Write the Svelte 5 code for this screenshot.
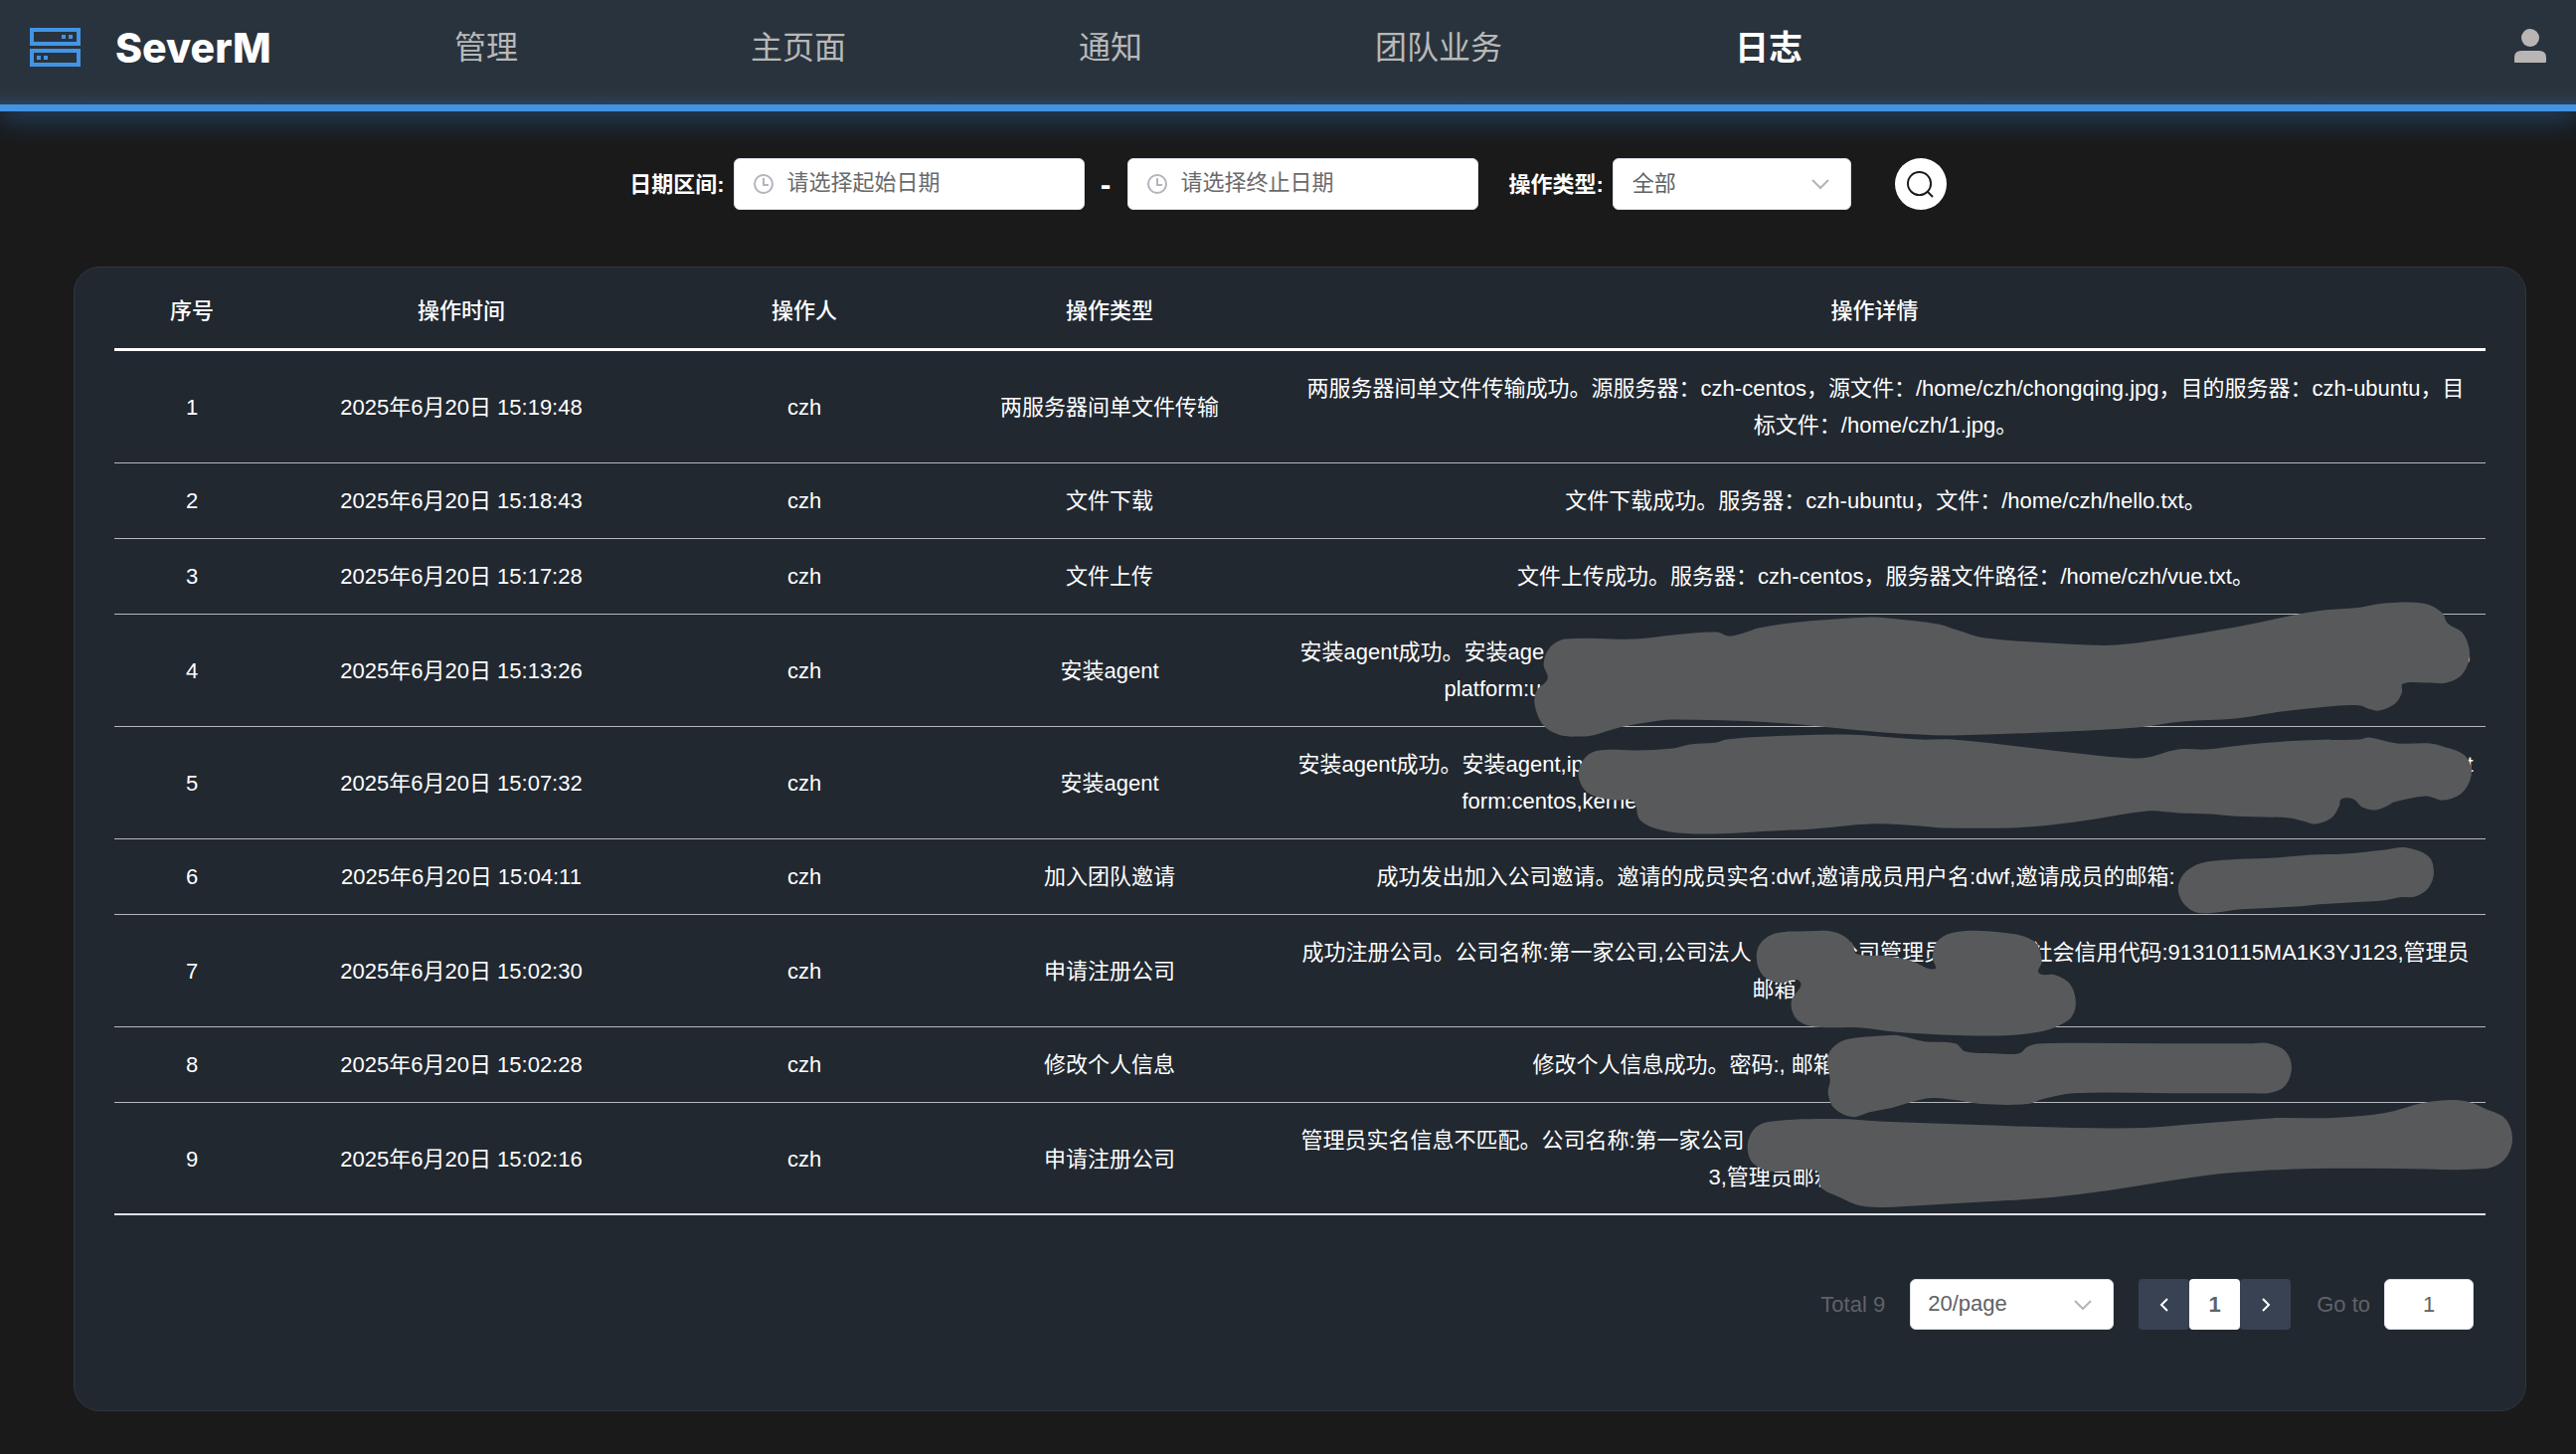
<script>
  const nav = [
    { label: '管理', active: false },
    { label: '主页面', active: false },
    { label: '通知', active: false },
    { label: '团队业务', active: false },
    { label: '日志', active: true }
  ];

  const columns = ['序号', '操作时间', '操作人', '操作类型', '操作详情'];

  // A detail is plain text, or a list of lines whose private parts are blanked out:
  // `parts` are the readable pieces, spread over the full `width` of the line.
  const rows = [
    { time: '15:19:48', type: '两服务器间单文件传输', text: '两服务器间单文件传输成功。源服务器：czh-centos，源文件：/home/czh/chongqing.jpg，目的服务器：czh-ubuntu，目标文件：/home/czh/1.jpg。' },
    { time: '15:18:43', type: '文件下载', text: '文件下载成功。服务器：czh-ubuntu，文件：/home/czh/hello.txt。' },
    { time: '15:17:28', type: '文件上传', text: '文件上传成功。服务器：czh-centos，服务器文件路径：/home/czh/vue.txt。' },
    { time: '15:13:26', type: '安装agent', lines: [
      { width: 1178, parts: ['安装agent成功。安装age', ','] },
      { width: 888, parts: ['platform:u'] }
    ] },
    { time: '15:07:32', type: '安装agent', lines: [
      { width: 1182, parts: ['安装agent成功。安装agent,ip', 't'] },
      { width: 852, parts: ['form:centos,kerne'] }
    ] },
    { time: '15:04:11', type: '加入团队邀请', lines: [
      { width: 1024, parts: ['成功发出加入公司邀请。邀请的成员实名:dwf,邀请成员用户名:dwf,邀请成员的邮箱:'] }
    ] },
    { time: '15:02:30', type: '申请注册公司', lines: [
      { width: 1174, parts: ['成功注册公司。公司名称:第一家公司,公司法人', '公司管理员', '社会信用代码:91310115MA1K3YJ123,管理员'] },
      { width: 268, parts: ['邮箱'] }
    ] },
    { time: '15:02:28', type: '修改个人信息', lines: [
      { width: 710, parts: ['修改个人信息成功。密码:, 邮箱'] }
    ] },
    { time: '15:02:16', type: '申请注册公司', lines: [
      { width: 1176, parts: ['管理员实名信息不匹配。公司名称:第一家公司'] },
      { width: 356, parts: ['3,管理员邮箱'] }
    ] }
  ];

  // Outlines of the marker strokes that cover private data.
  const marks = [
    [[1552,668],[1556,683],[1545,695],[1543,709],[1552,730],[1570,740],[1587,741],[1601,740],[1628,732],[1655,727],[1682,724],[1782,727],[1894,737],[1930,739],[1962,740],[2078,736],[2149,732],[2194,726],[2248,723],[2294,716],[2352,710],[2373,710],[2381,713],[2392,715],[2408,708],[2415,697],[2416,688],[2440,687],[2460,687],[2476,678],[2483,658],[2476,637],[2461,627],[2455,616],[2437,607],[2395,607],[2373,611],[2327,615],[2252,630],[2169,644],[2128,649],[2099,649],[1996,642],[1968,634],[1950,628],[1900,622],[1877,621],[1806,626],[1768,632],[1753,637],[1738,640],[1726,636],[1682,639],[1645,643],[1574,643],[1558,652]],
    [[1587,780],[1597,798],[1624,805],[1642,806],[1649,825],[1670,835],[1703,839],[1748,838],[1782,836],[1823,834],[1881,829],[1930,831],[1954,833],[2024,833],[2062,830],[2107,824],[2159,816],[2190,818],[2223,819],[2244,821],[2302,823],[2315,826],[2328,829],[2344,823],[2352,811],[2354,804],[2366,804],[2375,812],[2388,815],[2400,811],[2407,807],[2439,801],[2457,805],[2476,797],[2485,777],[2478,760],[2456,751],[2443,748],[2410,748],[2382,742],[2372,744],[2315,745],[2261,749],[2219,754],[2190,754],[2160,762],[2145,763],[2107,760],[2012,749],[1962,744],[1929,744],[1856,739],[1777,741],[1736,744],[1726,747],[1699,749],[1682,753],[1645,755],[1608,755],[1594,762]],
    [[2190,893],[2197,911],[2213,919],[2253,915],[2314,912],[2332,910],[2367,908],[2398,906],[2413,903],[2429,902],[2442,893],[2447,878],[2442,862],[2420,853],[2398,855],[2358,859],[2323,860],[2288,863],[2219,867],[2199,876]],
    [[1766,963],[1772,981],[1788,989],[1810,988],[1801,1008],[1806,1025],[1823,1033],[1869,1034],[1902,1038],[1930,1040],[1975,1042],[2017,1042],[2052,1038],[2070,1032],[2083,1023],[2087,1008],[2081,990],[2066,981],[2050,979],[2053,967],[2045,947],[2010,938],[1966,938],[1948,947],[1943,963],[1945,975],[1922,967],[1898,962],[1867,960],[1863,951],[1854,942],[1840,937],[1819,937],[1786,939],[1771,948]],
    [[1837,1067],[1840,1087],[1838,1100],[1844,1115],[1862,1124],[1881,1119],[1902,1115],[1922,1109],[1942,1105],[1966,1107],[1992,1111],[2039,1111],[2054,1106],[2085,1100],[2180,1100],[2265,1100],[2281,1100],[2297,1093],[2304,1075],[2298,1058],[2281,1050],[2265,1050],[2180,1050],[2052,1050],[2039,1053],[2030,1060],[2006,1060],[1976,1058],[1966,1050],[1935,1048],[1909,1042],[1896,1042],[1856,1046],[1842,1055]],
    [[1757,1155],[1763,1171],[1782,1179],[1826,1178],[1831,1195],[1850,1205],[1869,1213],[1890,1215],[1915,1214],[2019,1208],[2063,1205],[2120,1198],[2217,1183],[2275,1178],[2328,1176],[2410,1176],[2499,1176],[2518,1167],[2526,1147],[2519,1126],[2499,1116],[2482,1109],[2464,1107],[2436,1110],[2398,1120],[2345,1125],[2288,1125],[2208,1131],[2156,1135],[2085,1135],[1988,1132],[1900,1129],[1844,1126],[1778,1129],[1763,1137]]
  ];

  // Closed smooth curve through the points.
  function outline(p) {
    const n = p.length;
    let d = `M${p[0][0]} ${p[0][1]}`;
    for (let i = 0; i < n; i++) {
      const a = p[(i + n - 1) % n], b = p[i], c = p[(i + 1) % n], e = p[(i + 2) % n];
      const reach = Math.hypot(c[0] - b[0], c[1] - b[1]) / 3;
      const t1 = Math.hypot(c[0] - a[0], c[1] - a[1]) || 1;
      const t2 = Math.hypot(e[0] - b[0], e[1] - b[1]) || 1;
      const x1 = b[0] + ((c[0] - a[0]) / t1) * reach, y1 = b[1] + ((c[1] - a[1]) / t1) * reach;
      const x2 = c[0] - ((e[0] - b[0]) / t2) * reach, y2 = c[1] - ((e[1] - b[1]) / t2) * reach;
      d += `C${x1.toFixed(1)} ${y1.toFixed(1)} ${x2.toFixed(1)} ${y2.toFixed(1)} ${c[0]} ${c[1]}`;
    }
    return d + 'Z';
  }
</script>

{#snippet clock()}
  <svg class="clock" viewBox="0 0 22 22" aria-hidden="true">
    <circle cx="11" cy="11" r="9" />
    <path d="M11 5v7h5" />
  </svg>
{/snippet}

{#snippet chevron()}
  <svg class="chevron" viewBox="0 0 18 12" aria-hidden="true"><path d="M1 2l8 8 8-8" /></svg>
{/snippet}

<header>
  <a class="brand" href="#home">
    <svg class="logo" viewBox="0 0 51 40" aria-hidden="true">
      <rect x="2" y="2" width="47" height="14" />
      <rect x="2" y="23" width="47" height="14" />
      <path d="M32 9h4M39 9h4M7 30h4M14 30h4" />
    </svg>
    <span>SeverM</span>
  </a>
  <nav>
    {#each nav as item}
      <a href="#{item.label}" class:active={item.active}>{item.label}</a>
    {/each}
  </nav>
  <button class="user" aria-label="用户">
    <svg viewBox="0 0 32 34" aria-hidden="true">
      <circle cx="16" cy="9" r="9" />
      <path d="M7 22h18q7 0 7 7v4q0 1-1 1H1q-1 0-1-1v-4q0-7 7-7z" />
    </svg>
  </button>
</header>

<main>
  <form class="filters">
    <label for="from">日期区间:</label>
    <div class="field date">
      {@render clock()}
      <input id="from" type="text" placeholder="请选择起始日期" />
    </div>
    <span class="dash">-</span>
    <div class="field date">
      {@render clock()}
      <input type="text" placeholder="请选择终止日期" aria-label="终止日期" />
    </div>
    <label class="type-label" for="type">操作类型:</label>
    <div class="field type">
      <select id="type"><option>全部</option></select>
      {@render chevron()}
    </div>
    <button class="search" type="button" aria-label="搜索">
      <svg viewBox="0 0 28 28" aria-hidden="true">
        <circle cx="13" cy="13" r="12" />
        <path d="M21 21l6 6" />
      </svg>
    </button>
  </form>

  <section class="card">
    <div class="table-wrap">
      <table>
        <colgroup>
          <col class="c-index" /><col class="c-time" /><col class="c-user" /><col class="c-type" /><col />
        </colgroup>
        <thead>
          <tr>{#each columns as column}<th>{column}</th>{/each}</tr>
        </thead>
        <tbody>
          {#each rows as row, i}
            <tr>
              <td>{i + 1}</td>
              <td>2025年6月20日 {row.time}</td>
              <td>czh</td>
              <td>{row.type}</td>
              <td class="detail">
                {#if row.lines}
                  {#each row.lines as line}
                    <div class="line" style:width="{line.width}px">
                      {#each line.parts as part}<span>{part}</span>{/each}
                    </div>
                  {/each}
                {:else}
                  {row.text}
                {/if}
              </td>
            </tr>
          {/each}
        </tbody>
      </table>
      <svg class="marks" viewBox="115 275 2384 948" preserveAspectRatio="none" aria-hidden="true">
        {#each marks as mark}<path d={outline(mark)} />{/each}
      </svg>
    </div>

    <div class="pagination">
      <span class="total">Total 9</span>
      <div class="field size">
        <select aria-label="每页条数"><option>20/page</option></select>
        {@render chevron()}
      </div>
      <div class="pager">
        <button aria-label="上一页"><svg viewBox="0 0 10 16" aria-hidden="true"><path d="M8 2L2 8l6 6" /></svg></button>
        <button class="current">1</button>
        <button aria-label="下一页"><svg viewBox="0 0 10 16" aria-hidden="true"><path d="M2 2l6 6-6 6" /></svg></button>
      </div>
      <label for="goto">Go to</label>
      <input id="goto" type="text" value="1" />
    </div>
  </section>
</main>

<style>
  :global(body) {
    margin: 0;
    background: #1a1a1a;
    color: #fff;
    font-family: "Liberation Sans", "Noto Sans CJK SC", sans-serif;
    font-size: 22px;
    line-height: 37px;
  }
  input, select, button {
    box-sizing: border-box;
    margin: 0;
    border: 0;
    font: inherit;
  }
  a { color: inherit; text-decoration: none; }

  header {
    display: flex;
    align-items: center;
    box-sizing: border-box;
    height: 112px;
    padding: 0 30px;
    border-bottom: 7px solid #4394e4;
    background: linear-gradient(#29333d 88px, #2b3643 96px, #2a4058);
    box-shadow: 0 12px 24px rgba(50, 130, 215, 0.3);
  }
  .brand, nav, .user { margin-bottom: 9px; }
  .brand {
    display: flex;
    align-items: center;
    gap: 35px;
    width: 427px;
    font: 800 41px/56px Inter, sans-serif;
  }
  .logo { width: 51px; height: 40px; fill: none; stroke: #4394e4; stroke-width: 4; }
  nav {
    display: flex;
    align-items: center;
    gap: 234px;
    font-size: 32px;
    line-height: 56px;
    color: #b8b8b8;
    white-space: nowrap;
  }
  nav a.active { color: #fff; font-size: 34px; font-weight: 700; }
  .user { margin-left: auto; padding: 0; background: none; }
  .user svg { display: block; width: 32px; height: 34px; margin-bottom: 4px; fill: #b8b5b4; }

  .filters {
    display: flex;
    align-items: center;
    justify-content: center;
    padding: 47px 0 57px;
  }
  label { white-space: nowrap; }
  .filters label { margin-right: 9px; font-weight: 700; }
  .filters .type-label { margin-left: 31px; }
  .field { position: relative; display: flex; align-items: center; }
  .field input, .field select {
    width: 100%;
    height: 52px;
    padding: 0 19px 2px;
    border: 1px solid #dcdfe6;
    border-radius: 6px;
    background: #fff;
    color: #606266;
    appearance: none;
  }
  .date { width: 353px; }
  .field.date input { padding-left: 53px; }
  input::placeholder { color: #6a6a6c; opacity: 1; }
  .type { width: 240px; }
  .clock {
    position: absolute;
    left: 19px;
    width: 22px;
    height: 22px;
    fill: none;
    stroke: #b2b5bb;
    stroke-width: 2;
  }
  .chevron {
    position: absolute;
    right: 22px;
    width: 18px;
    height: 12px;
    fill: none;
    stroke: #b2b5bb;
    stroke-width: 2;
    pointer-events: none;
  }
  .dash { width: 43px; text-align: center; font-size: 32px; font-weight: 700; }
  .search {
    display: grid;
    place-items: center;
    width: 52px;
    height: 52px;
    margin-left: 44px;
    padding: 0;
    border-radius: 50%;
    background: #fff;
  }
  .search svg { width: 27px; height: 27px; fill: none; stroke: #1a1a1a; stroke-width: 2; }

  .card {
    box-sizing: border-box;
    margin: 0 50px 42px 74px;
    padding: 6px 40px 81px;
    border: 1px solid #2f373f;
    border-radius: 26px;
    background: #212830;
  }
  .table-wrap { position: relative; }
  table {
    width: 100%;
    table-layout: fixed;
    border-collapse: separate;
    border-spacing: 0;
    text-align: center;
  }
  .c-index { width: 156px; }
  .c-time { width: 386px; }
  .c-user { width: 304px; }
  .c-type { width: 310px; }
  th {
    padding: 19px 12px;
    border-bottom: 3px solid #fff;
    font-weight: 500;
  }
  td { padding: 19px 12px; border-bottom: 1px solid #b4b8be; }
  .detail { padding-left: 34px; }
  tbody tr:last-child td { padding-bottom: 18px; border-bottom: 2px solid #dfe2e6; }
  .line {
    display: flex;
    justify-content: space-between;
    max-width: 100%;
    margin: 0 auto;
    white-space: nowrap;
  }
  .marks {
    position: absolute;
    inset: 0;
    width: 100%;
    height: 100%;
    overflow: visible;
    fill: #58595b;
    pointer-events: none;
  }

  .pagination {
    display: flex;
    align-items: center;
    justify-content: flex-end;
    margin-top: 64px;
    padding-right: 12px;
    color: #606266;
  }
  .total { margin-right: 25px; }
  .size { width: 205px; margin-right: 25px; }
  .pager { display: flex; margin-right: 26px; }
  .pager button {
    display: grid;
    place-items: center;
    width: 51px;
    height: 51px;
    padding: 0;
    border-radius: 4px;
    background: #394252;
  }
  .pager svg { width: 10px; height: 16px; fill: none; stroke: #fff; stroke-width: 2; }
  .pager .current { background: #fff; color: #606266; font-weight: 700; }
  .size select { height: 51px; padding-left: 17px; }
  #goto {
    width: 90px;
    height: 51px;
    margin-left: 14px;
    border: 1px solid #dcdfe6;
    border-radius: 6px;
    background: #fff;
    color: #606266;
    text-align: center;
  }
</style>
